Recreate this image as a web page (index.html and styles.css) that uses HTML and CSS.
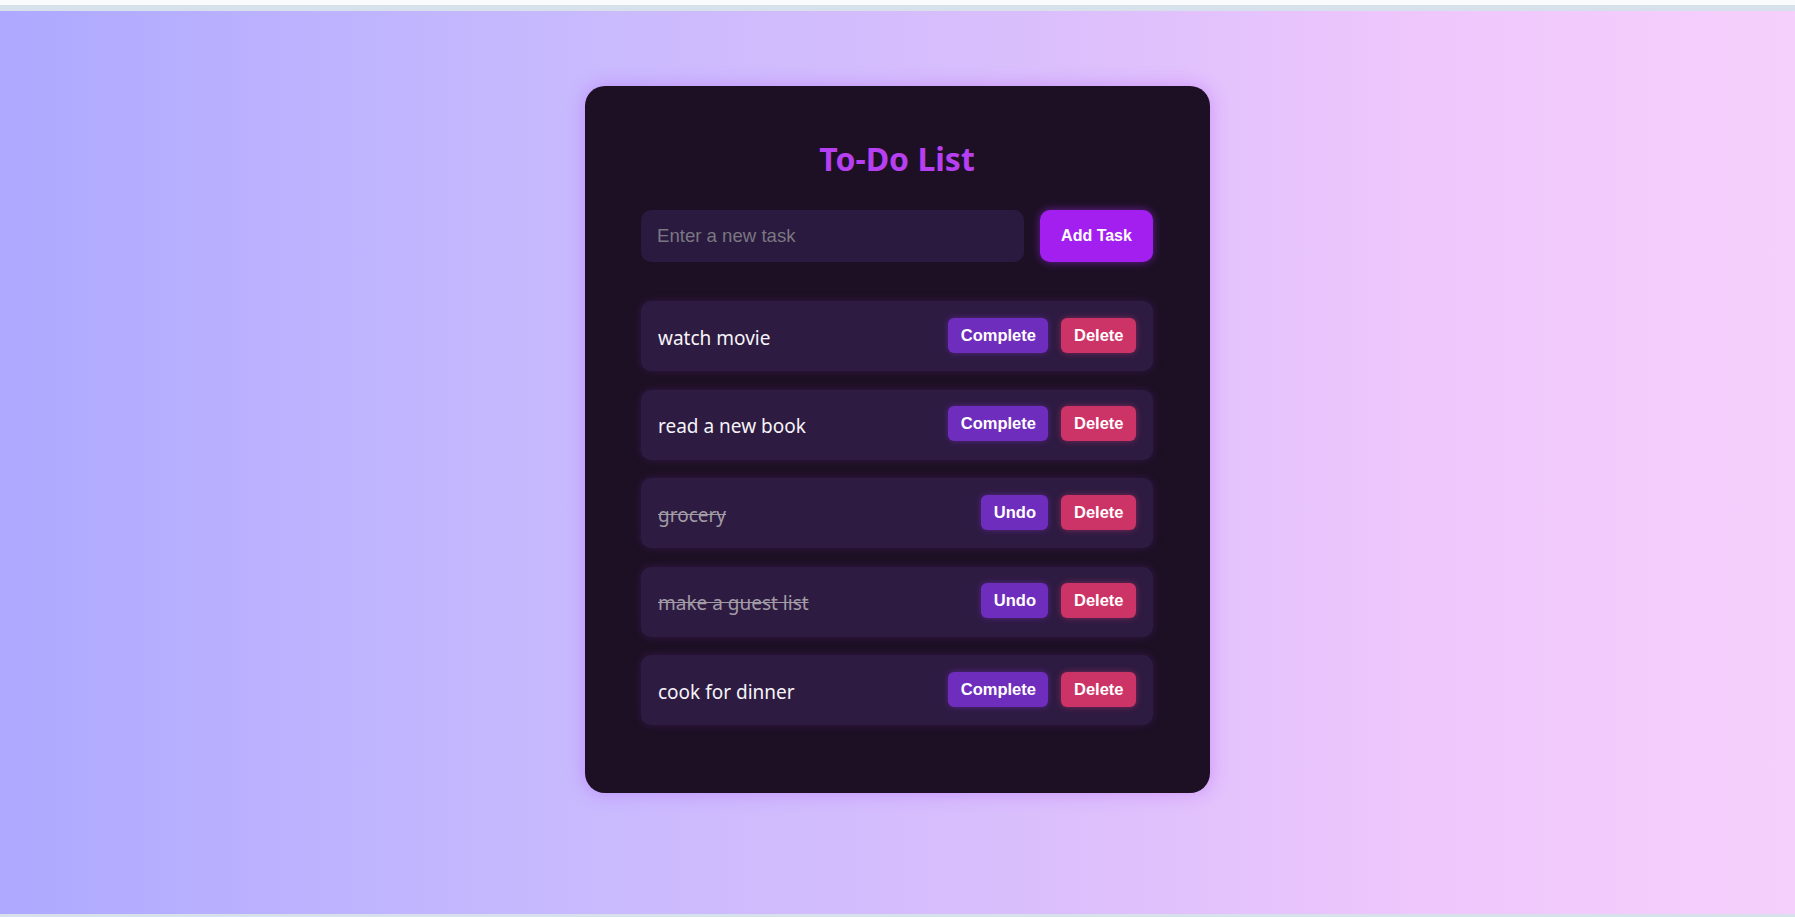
FILE: index.html
```html
<!DOCTYPE html>
<html lang="en">
<head>
<meta charset="utf-8">
<title>To-Do List</title>
<link rel="stylesheet" href="styles.css">
</head>
<body>
  <div class="topbar"><div class="topbar-line"></div></div>
  <main class="stage">
    <section class="card">
      <h1 class="title">To-Do List</h1>
      <div class="entry">
        <input class="entry-input" type="text" placeholder="Enter a new task">
        <button class="btn-add">Add Task</button>
      </div>
      <ul class="tasks">
        <li class="task">
          <span class="task-text">watch movie</span>
          <div class="task-actions">
            <button class="btn btn-complete">Complete</button>
            <button class="btn btn-delete">Delete</button>
          </div>
        </li>
        <li class="task">
          <span class="task-text">read a new book</span>
          <div class="task-actions">
            <button class="btn btn-complete">Complete</button>
            <button class="btn btn-delete">Delete</button>
          </div>
        </li>
        <li class="task done">
          <span class="task-text">grocery</span>
          <div class="task-actions">
            <button class="btn btn-complete">Undo</button>
            <button class="btn btn-delete">Delete</button>
          </div>
        </li>
        <li class="task done">
          <span class="task-text">make a guest list</span>
          <div class="task-actions">
            <button class="btn btn-complete">Undo</button>
            <button class="btn btn-delete">Delete</button>
          </div>
        </li>
        <li class="task">
          <span class="task-text">cook for dinner</span>
          <div class="task-actions">
            <button class="btn btn-complete">Complete</button>
            <button class="btn btn-delete">Delete</button>
          </div>
        </li>
      </ul>
    </section>
  </main>
  <div class="bottombar"></div>
</body>
</html>
```

FILE: styles.css
```css
* { box-sizing: border-box; }
html, body { margin: 0; padding: 0; }
body {
  width: 1795px;
  height: 917px;
  overflow: hidden;
  display: flex;
  flex-direction: column;
  background: #fafbfc;
  font-family: "Noto Sans", "Open Sans", sans-serif;
}
.topbar {
  height: 11px;
  padding-top: 5px;
  flex: none;
}
.topbar-line {
  height: 6px;
  background: #d7e1eb;
}
.stage {
  flex: 1;
  background: linear-gradient(90deg, #aea9ff 0%, #c7b9fe 30%, #dcbffc 60%, #efc7fc 80%, #f6d0fc 100%);
  display: flex;
  justify-content: center;
  align-items: flex-start;
  padding-top: 75px;
}
.bottombar {
  height: 3px;
  flex: none;
  background: #d7e1eb;
}
.card {
  width: 625px;
  height: 707px;
  background: #1d1024;
  border-radius: 20px;
  padding: 54px 57px 0 56px;
  box-shadow: 0 0 18px rgba(170, 60, 255, 0.35);
}
.title {
  margin: 0;
  text-align: center;
  color: #b63ff1;
  font-size: 32px;
  font-weight: 700;
  line-height: 38px;
}
.entry {
  margin-top: 32px;
  display: flex;
  gap: 16px;
}
.entry-input {
  flex: 1;
  height: 52px;
  border: none;
  outline: none;
  border-radius: 10px;
  background: #2a1a3f;
  padding: 0 16px;
  font-family: "Liberation Sans", Arial, sans-serif;
  font-size: 18.6px;
  color: #ddd;
}
.entry-input::placeholder { color: #7b7782; }
.btn-add {
  width: 113px;
  height: 52px;
  border: none;
  border-radius: 10px;
  background: #a21ff0;
  color: #fff;
  font-family: "Liberation Sans", Arial, sans-serif;
  font-weight: 700;
  font-size: 16px;
  box-shadow: 0 0 8px rgba(170, 40, 255, 0.55);
}
.tasks {
  list-style: none;
  margin: 39px 0 0;
  padding: 0;
  display: flex;
  flex-direction: column;
  gap: 18.5px;
}
.task {
  height: 70px;
  display: flex;
  align-items: center;
  justify-content: space-between;
  padding: 0 17px 0 17px;
  background: #2e1b42;
  border-radius: 10px;
  box-shadow: 0 0 8px rgba(120, 40, 180, 0.25);
}
.task-text {
  color: #f6f4f8;
  font-size: 19px;
  line-height: 26px;
  padding-top: 3px;
}
.task.done .task-text {
  color: #a29ca6;
  text-decoration: line-through;
}
.task-actions {
  display: flex;
  gap: 13px;
  margin-top: -2px;
}
.btn {
  height: 35px;
  border: none;
  border-radius: 6px;
  padding: 0 12.5px;
  color: #fff;
  font-family: "Liberation Sans", Arial, sans-serif;
  font-weight: 700;
  font-size: 16.5px;
}
.btn-complete {
  background: #6f2dbd;
  box-shadow: 0 0 6px rgba(130, 50, 220, 0.45);
}
.btn-delete {
  background: #cc3366;
  box-shadow: 0 0 6px rgba(220, 60, 110, 0.45);
}
```
